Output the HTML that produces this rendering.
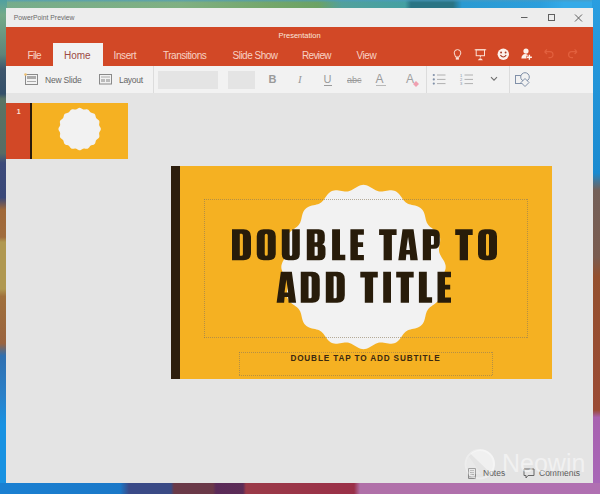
<!DOCTYPE html>
<html><head><meta charset="utf-8">
<style>
*{margin:0;padding:0;box-sizing:border-box}
html,body{width:600px;height:494px;overflow:hidden;background:#5a8a8a}
body{position:relative;font-family:"Liberation Sans",sans-serif}
.a{position:absolute;line-height:1;white-space:nowrap}
#bgtop{position:absolute;left:0;top:0;width:600px;height:9px;background:linear-gradient(90deg,#6aa49a 0%,#7aae8c 20%,#7aac84 45%,#5aa2a0 62%,#2a6a7c 69%,#2c7aa0 74%,#2a98d4 80%,#34aae6 100%)}
#bgleft{position:absolute;left:0;top:0;width:7px;height:494px;background:linear-gradient(180deg,#50a0a0 0%,#74aa88 3%,#6a9c80 12%,#3c5c6c 18%,#2e3e66 20%,#6a8a62 27%,#485a74 32%,#3a4a7c 38%,#a87a48 42%,#b89044 52%,#c49a48 57%,#a86a40 61%,#a05a3a 70%,#3a74b0 74%,#2a84cc 80%,#1892e2 86%,#1892e2 100%)}
#bgright{position:absolute;left:592px;top:0;width:8px;height:494px;background:linear-gradient(180deg,#1a92da 0%,#1c94dc 38%,#7a6050 47%,#924a32 54%,#9a4a34 83%,#a062b2 85%,#a060b4 100%)}
#bgbot{position:absolute;left:0;top:483px;width:600px;height:11px;background:linear-gradient(90deg,#1a86d4 0%,#2078c4 18%,#3a4a82 24%,#3a4a7c 29%,#7a3a4c 31%,#7a3a4a 35%,#5a2a5a 38%,#5c2c58 43%,#9a3040 45%,#9a2c48 60%,#b070a2 62%,#a868b0 75%,#a060b4 100%)}
#win{position:absolute;left:6px;top:8px;width:587px;height:475px;background:#e4e4e4;overflow:hidden}
#title{position:absolute;left:0;top:0;width:587px;height:19px;background:#ededed}
#ribbon{position:absolute;left:0;top:19px;width:587px;height:38.5px;background:#d24826}
#tool{position:absolute;left:0;top:57.5px;width:587px;height:27px;background:#f2f2f2}
.tab{color:#f8d2c4;font-size:10px}
.tb{color:#666;font-size:8.5px}
.sep{position:absolute;top:0;width:1px;height:27px;background:#dcdcdc}
</style></head><body>
<svg style="position:absolute;left:0;top:0" width="600" height="494">
  <defs>
    <linearGradient id="gtop" x1="0" x2="1" y1="0" y2="0">
      <stop offset="0" stop-color="#76ac8c"/><stop offset="0.3" stop-color="#80b082"/><stop offset="0.45" stop-color="#74a66a"/>
      <stop offset="0.53" stop-color="#6ca264"/><stop offset="0.57" stop-color="#52a09c"/><stop offset="0.675" stop-color="#44a0a2"/>
      <stop offset="0.685" stop-color="#2a7484"/><stop offset="0.755" stop-color="#2a7484"/><stop offset="0.77" stop-color="#2a9ad2"/>
      <stop offset="0.9" stop-color="#2c9edc"/><stop offset="0.94" stop-color="#34aae8"/><stop offset="1" stop-color="#34aae8"/>
    </linearGradient>
    <linearGradient id="gtopv" x1="0" x2="0" y1="0" y2="1">
      <stop offset="0" stop-color="#4a9ac0" stop-opacity="0.7"/><stop offset="0.3" stop-color="#4a9ac0" stop-opacity="0"/>
    </linearGradient>
    <linearGradient id="gleft" x1="0" x2="0" y1="0" y2="1">
      <stop offset="0" stop-color="#50a0a0"/><stop offset="0.03" stop-color="#74aa88"/><stop offset="0.11" stop-color="#5e847a"/>
      <stop offset="0.14" stop-color="#3e566c"/><stop offset="0.19" stop-color="#34506a"/><stop offset="0.2" stop-color="#5a7464"/>
      <stop offset="0.31" stop-color="#586c64"/><stop offset="0.33" stop-color="#3c4a7a"/><stop offset="0.4" stop-color="#3a4878"/>
      <stop offset="0.425" stop-color="#a06838"/><stop offset="0.48" stop-color="#a06c3c"/><stop offset="0.49" stop-color="#b09850"/>
      <stop offset="0.585" stop-color="#b09850"/><stop offset="0.6" stop-color="#a0703c"/><stop offset="0.695" stop-color="#9a6440"/>
      <stop offset="0.72" stop-color="#3070b0"/><stop offset="0.8" stop-color="#2a80c8"/><stop offset="0.86" stop-color="#1892e2"/><stop offset="1" stop-color="#1892e2"/>
    </linearGradient>
    <linearGradient id="gright" x1="0" x2="0" y1="0" y2="1">
      <stop offset="0" stop-color="#2a9ee0"/><stop offset="0.35" stop-color="#1a8ad0"/><stop offset="0.385" stop-color="#746058"/>
      <stop offset="0.52" stop-color="#7a5c50"/><stop offset="0.56" stop-color="#94502e"/><stop offset="0.83" stop-color="#9a4a34"/><stop offset="0.845" stop-color="#a862b0"/><stop offset="1" stop-color="#a868b8"/>
    </linearGradient>
    <linearGradient id="gbot" x1="0" x2="1" y1="0" y2="0">
      <stop offset="0" stop-color="#1a80d2"/><stop offset="0.2" stop-color="#1a78c8"/><stop offset="0.215" stop-color="#3a4a88"/>
      <stop offset="0.285" stop-color="#3a4a84"/><stop offset="0.29" stop-color="#6a3a48"/><stop offset="0.355" stop-color="#6a3848"/>
      <stop offset="0.36" stop-color="#5a2a58"/><stop offset="0.405" stop-color="#5c2c56"/><stop offset="0.41" stop-color="#9a3a48"/>
      <stop offset="0.59" stop-color="#9a3048"/><stop offset="0.6" stop-color="#b070a8"/><stop offset="1" stop-color="#b070b2"/>
    </linearGradient>
  </defs>
  <rect x="0" y="0" width="600" height="494" fill="#808080"/>
  <rect x="0" y="0" width="600" height="9" fill="url(#gtop)"/>
  <rect x="0" y="0" width="600" height="9" fill="url(#gtopv)"/>
  <rect x="0" y="0" width="7" height="494" fill="url(#gleft)"/>
  <rect x="592" y="0" width="8" height="494" fill="url(#gright)"/>
  <rect x="0" y="483" width="600" height="11" fill="url(#gbot)"/>
</svg>
<div id="win">
  <div id="title">
    <div class="a" style="left:7.7px;top:6.6px;font-size:6.8px;color:#6a6a6a">PowerPoint Preview</div>
    <svg style="position:absolute;left:500px;top:0" width="87" height="19">
      <line x1="15" y1="9.5" x2="21.5" y2="9.5" stroke="#606060" stroke-width="1"/>
      <rect x="42.5" y="6.5" width="6" height="6" fill="none" stroke="#606060" stroke-width="1"/>
      <path d="M69 6.5 L76 13.5 M76 6.5 L69 13.5" stroke="#606060" stroke-width="1"/>
    </svg>
  </div>
  <div id="ribbon">
    <div class="a" style="left:272.5px;top:4.5px;font-size:7.5px;color:#fbe6dc">Presentation</div>
    <div style="position:absolute;left:47px;top:16px;width:49.5px;height:22.5px;background:#f2f2f2"></div>
    <div class="a tab" style="left:21.5px;top:23.8px;letter-spacing:-0.7px">File</div>
    <div class="a tab" style="left:58px;top:23.8px;color:#9c4a44">Home</div>
    <div class="a tab" style="left:107.5px;top:23.8px;letter-spacing:-0.4px">Insert</div>
    <div class="a tab" style="left:157px;top:23.8px;letter-spacing:-0.48px">Transitions</div>
    <div class="a tab" style="left:226.5px;top:23.8px;letter-spacing:-0.5px">Slide Show</div>
    <div class="a tab" style="left:296px;top:23.8px;letter-spacing:-0.65px">Review</div>
    <div class="a tab" style="left:350.5px;top:23.8px;letter-spacing:-0.45px">View</div>
    <svg style="position:absolute;left:440px;top:19px" width="147" height="19">
      <g fill="none" stroke="#fbe0d4" stroke-width="1">
        <path d="M9.6 11 C9.6 9.6 8.2 8.7 8.2 6.9 A3.3 3.3 0 1 1 14.8 6.9 C14.8 8.7 13.2 9.6 13.2 11 Z"/>
        <path d="M28.7 3.8 H40.2"/>
        <rect x="30.2" y="3.8" width="8.3" height="5.9"/>
        <path d="M34.35 9.7 V11.5"/>
      </g>
      <rect x="9.8" y="11.3" width="3.1" height="2.3" fill="#fbe0d4"/>
      <path d="M31.8 14.2 Q34.35 10.3 36.9 14.2 Z" fill="#fbe0d4"/>
      <circle cx="57.3" cy="8.2" r="5.7" fill="#fdf2ec"/>
      <circle cx="55.1" cy="6.5" r="0.95" fill="#a83a22"/>
      <circle cx="59.6" cy="6.5" r="0.95" fill="#a83a22"/>
      <path d="M54.4 9.2 Q57.3 12.8 60.2 9.2" fill="none" stroke="#a83a22" stroke-width="1.1"/>
      <circle cx="80" cy="5.1" r="2.6" fill="#fdf2ec"/>
      <path d="M75.4 12.6 C75.4 9.6 77.2 8 79.2 8 C81 8 82.6 9.2 82.6 10.8 V12.6 Z" fill="#fdf2ec"/>
      <path d="M83.4 8.3 V14.3 M80.4 11.3 H86.4" stroke="#d24826" stroke-width="3"/>
      <path d="M83.4 8.8 V13.8 M80.9 11.3 H85.9" stroke="#fdf2ec" stroke-width="1.4"/>
      <g fill="none" stroke="#e2603e" stroke-width="1.2">
        <path d="M98.6 5.7 L101 3.4 M98.6 5.7 L101 8 M98.6 5.7 H104 A3 3 0 0 1 104 11.7 H102.5"/>
        <path d="M131 5.7 L128.6 3.4 M131 5.7 L128.6 8 M131 5.7 H125.6 A3 3 0 0 0 125.6 11.7 H127"/>
      </g>
    </svg>
  </div>
  <div id="tool">
    <svg style="position:absolute;left:18px;top:7px" width="14" height="12">
      <rect x="1.5" y="1.5" width="12" height="10" fill="none" stroke="#8a8a8a" stroke-width="1"/>
      <rect x="3" y="3" width="9" height="3" fill="#aaaaaa"/>
      <line x1="3" y1="8.5" x2="12" y2="8.5" stroke="#aaa" stroke-width="1"/>
      <circle cx="1.5" cy="1.5" r="1.3" fill="#f0c070"/>
    </svg>
    <div class="a tb" style="left:39px;top:10px;letter-spacing:-0.2px">New Slide</div>
    <svg style="position:absolute;left:92px;top:7px" width="14" height="12">
      <rect x="1.5" y="1.5" width="12" height="9.5" fill="none" stroke="#8a8a8a" stroke-width="1"/>
      <line x1="3" y1="4" x2="12" y2="4" stroke="#aaa" stroke-width="1"/>
      <rect x="3" y="6" width="4" height="3" fill="#bbb"/>
      <rect x="8" y="6" width="4" height="3" fill="#bbb"/>
    </svg>
    <div class="a tb" style="left:113px;top:10px;letter-spacing:-0.3px">Layout</div>
    <div class="sep" style="left:146.5px"></div>
    <div style="position:absolute;left:152px;top:5px;width:60px;height:18px;background:#e4e4e4"></div>
    <div style="position:absolute;left:221.5px;top:5px;width:27px;height:18px;background:#e4e4e4"></div>
    <div class="a" style="left:262.5px;top:8.5px;font-size:11px;font-weight:bold;color:#9a9a9a">B</div>
    <div class="a" style="left:292px;top:8.5px;font-size:11px;font-style:italic;color:#9a9a9a;font-family:'Liberation Serif',serif">I</div>
    <div class="a" style="left:317.5px;top:8.5px;font-size:11px;color:#9a9a9a">U</div>
    <div style="position:absolute;left:317.5px;top:19.5px;width:8.5px;height:1px;background:#9a9a9a"></div>
    <div class="a" style="left:341px;top:10.5px;font-size:9px;color:#9a9a9a;text-decoration:line-through">abc</div>
    <div class="a" style="left:369.5px;top:7.5px;font-size:12px;color:#9a9a9a">A</div>
    <div style="position:absolute;left:369.5px;top:19.5px;width:10.5px;height:1px;background:#b8b8b8"></div>
    <div class="a" style="left:400px;top:7.5px;font-size:12px;color:#a0a0a0">A</div>
    <svg style="position:absolute;left:406px;top:14px" width="8" height="8"><path d="M1 4 L4 1 L7 4 L4 7Z" fill="#f0a0b0"/></svg>
    <div class="sep" style="left:419.5px"></div>
    <svg style="position:absolute;left:425px;top:6.5px" width="80" height="14">
      <g fill="#8090a8"><circle cx="2.8" cy="3" r="1.1"/><circle cx="2.8" cy="7.4" r="1.1"/><circle cx="2.8" cy="11.6" r="1.1"/></g>
      <g stroke="#b0b0b0" stroke-width="1"><line x1="6" y1="3" x2="14.5" y2="3"/><line x1="6" y1="7.4" x2="14.5" y2="7.4"/><line x1="6" y1="11.6" x2="14.5" y2="11.6"/>
      <line x1="33.5" y1="3" x2="42" y2="3"/><line x1="33.5" y1="7.4" x2="42" y2="7.4"/><line x1="33.5" y1="11.6" x2="42" y2="11.6"/></g>
      <g font-size="4" fill="#8090a8" font-family="Liberation Sans"><text x="29" y="4.5">1</text><text x="29" y="9">2</text><text x="29" y="13">3</text></g>
      <path d="M60 5.2 L63 8.2 L66 5.2" fill="none" stroke="#707070" stroke-width="1.1"/>
    </svg>
    <div class="sep" style="left:502.5px"></div>
    <svg style="position:absolute;left:508px;top:5px" width="18" height="18">
      <rect x="1.5" y="4.5" width="8" height="8" fill="none" stroke="#8090a8" stroke-width="1"/>
      <circle cx="11" cy="6" r="4.3" fill="#f2f2f2" stroke="#8090a8" stroke-width="1"/>
      <path d="M11 7.5 L15 11.5 L11 15.5 L7 11.5 Z" fill="#f2f2f2" stroke="#8090a8" stroke-width="1"/>
    </svg>
  </div>

  <!-- thumbnail -->
  <div style="position:absolute;left:0;top:95.2px;width:23.75px;height:55.5px;background:#d24826"></div>
  <div class="a" style="left:10.8px;top:99.5px;font-size:7px;font-weight:bold;color:#fbe3d8">1</div>
  <div style="position:absolute;left:23.75px;top:95.2px;width:98.25px;height:55.5px;background:#f5b122;overflow:hidden">
    <div style="position:absolute;left:0;top:0;width:2.2px;height:56px;background:#2a1a0a"></div>
    <svg style="position:absolute;left:0;top:0" width="99" height="56" viewBox="0 0 99 56">
      <path id="thumbscallop" d="M49.65 4.85 L50.38 4.96 L51.10 5.26 L51.79 5.67 L52.45 6.09 L53.11 6.40 L53.79 6.56 L54.51 6.55 L55.27 6.44 L56.06 6.31 L56.84 6.27 L57.58 6.40 L58.25 6.73 L58.81 7.25 L59.31 7.88 L59.76 8.53 L60.24 9.10 L60.78 9.54 L61.42 9.84 L62.15 10.04 L62.93 10.22 L63.69 10.45 L64.35 10.82 L64.88 11.34 L65.24 12.01 L65.48 12.76 L65.65 13.54 L65.85 14.27 L66.15 14.91 L66.59 15.46 L67.17 15.93 L67.81 16.39 L68.44 16.88 L68.96 17.45 L69.30 18.11 L69.42 18.85 L69.38 19.63 L69.25 20.43 L69.14 21.19 L69.13 21.91 L69.29 22.58 L69.61 23.24 L70.02 23.91 L70.43 24.59 L70.73 25.31 L70.85 26.05 L70.73 26.78 L70.43 27.50 L70.02 28.19 L69.61 28.85 L69.29 29.51 L69.13 30.19 L69.14 30.91 L69.25 31.67 L69.38 32.46 L69.42 33.25 L69.30 33.99 L68.96 34.65 L68.44 35.22 L67.81 35.71 L67.17 36.16 L66.59 36.64 L66.15 37.18 L65.85 37.82 L65.65 38.55 L65.48 39.33 L65.24 40.09 L64.88 40.76 L64.35 41.28 L63.69 41.64 L62.93 41.88 L62.15 42.05 L61.42 42.25 L60.78 42.56 L60.24 43.00 L59.76 43.57 L59.31 44.22 L58.81 44.85 L58.25 45.36 L57.58 45.70 L56.84 45.83 L56.06 45.79 L55.27 45.66 L54.51 45.54 L53.79 45.54 L53.11 45.69 L52.45 46.01 L51.79 46.42 L51.10 46.83 L50.38 47.14 L49.65 47.25 L48.91 47.14 L48.19 46.83 L47.50 46.42 L46.84 46.01 L46.18 45.69 L45.50 45.54 L44.79 45.54 L44.02 45.66 L43.23 45.79 L42.45 45.83 L41.71 45.70 L41.05 45.36 L40.48 44.85 L39.99 44.22 L39.53 43.57 L39.06 43.00 L38.51 42.56 L37.87 42.25 L37.14 42.05 L36.36 41.88 L35.60 41.64 L34.94 41.28 L34.41 40.76 L34.05 40.09 L33.81 39.33 L33.64 38.55 L33.44 37.82 L33.14 37.18 L32.70 36.64 L32.12 36.16 L31.48 35.71 L30.85 35.22 L30.33 34.65 L30.00 33.99 L29.87 33.25 L29.91 32.46 L30.04 31.67 L30.15 30.91 L30.16 30.19 L30.00 29.51 L29.68 28.85 L29.27 28.19 L28.86 27.50 L28.56 26.78 L28.45 26.05 L28.56 25.31 L28.86 24.59 L29.27 23.91 L29.68 23.24 L30.00 22.58 L30.16 21.91 L30.15 21.19 L30.04 20.43 L29.91 19.63 L29.87 18.85 L30.00 18.11 L30.33 17.45 L30.85 16.88 L31.48 16.39 L32.12 15.93 L32.70 15.46 L33.14 14.91 L33.44 14.27 L33.64 13.54 L33.81 12.76 L34.05 12.01 L34.41 11.34 L34.94 10.82 L35.60 10.45 L36.36 10.22 L37.14 10.04 L37.87 9.84 L38.51 9.54 L39.06 9.10 L39.53 8.53 L39.99 7.88 L40.48 7.25 L41.05 6.73 L41.71 6.40 L42.45 6.27 L43.23 6.31 L44.02 6.44 L44.79 6.55 L45.50 6.56 L46.18 6.40 L46.84 6.09 L47.50 5.67 L48.19 5.26 L48.91 4.96Z" fill="#f2f2f2"/>
    </svg>
  </div>

  <!-- slide -->
  <div style="position:absolute;left:165px;top:158px;width:381px;height:213px;background:#f5b122;overflow:hidden">
    <div style="position:absolute;left:0;top:0;width:8.5px;height:213px;background:#2d1e0d"></div>
    <svg style="position:absolute;left:0;top:0" width="381" height="213">
      <path id="bigscallop" d="M192.50 18.80 L193.93 18.91 L195.36 19.23 L196.76 19.74 L198.14 20.40 L199.48 21.17 L200.80 22.00 L202.10 22.82 L203.38 23.60 L204.65 24.28 L205.93 24.82 L207.23 25.21 L208.56 25.43 L209.93 25.49 L211.35 25.41 L212.80 25.22 L214.30 24.97 L215.83 24.70 L217.37 24.47 L218.90 24.32 L220.41 24.31 L221.88 24.46 L223.28 24.81 L224.61 25.36 L225.85 26.10 L226.99 27.03 L228.05 28.11 L229.03 29.30 L229.96 30.55 L230.85 31.82 L231.72 33.06 L232.62 34.23 L233.56 35.28 L234.58 36.21 L235.67 36.99 L236.87 37.64 L238.16 38.16 L239.54 38.58 L240.99 38.93 L242.49 39.26 L244.01 39.61 L245.51 40.02 L246.95 40.53 L248.30 41.16 L249.53 41.94 L250.62 42.88 L251.56 43.97 L252.34 45.20 L252.97 46.55 L253.48 47.99 L253.89 49.49 L254.24 51.01 L254.57 52.51 L254.92 53.96 L255.34 55.34 L255.86 56.63 L256.51 57.83 L257.29 58.92 L258.22 59.94 L259.27 60.88 L260.44 61.77 L261.68 62.65 L262.95 63.54 L264.20 64.47 L265.39 65.45 L266.47 66.51 L267.40 67.65 L268.14 68.89 L268.69 70.22 L269.04 71.62 L269.19 73.09 L269.18 74.60 L269.03 76.13 L268.80 77.67 L268.53 79.20 L268.28 80.70 L268.09 82.15 L268.01 83.57 L268.07 84.94 L268.29 86.27 L268.68 87.57 L269.22 88.85 L269.90 90.12 L270.68 91.40 L271.50 92.70 L272.33 94.02 L273.10 95.36 L273.76 96.74 L274.27 98.14 L274.59 99.57 L274.70 101.00 L274.59 102.43 L274.27 103.86 L273.76 105.26 L273.10 106.64 L272.33 107.98 L271.50 109.30 L270.68 110.60 L269.90 111.88 L269.22 113.15 L268.68 114.43 L268.29 115.73 L268.07 117.06 L268.01 118.43 L268.09 119.85 L268.28 121.30 L268.53 122.80 L268.80 124.33 L269.03 125.87 L269.18 127.40 L269.19 128.91 L269.04 130.38 L268.69 131.78 L268.14 133.11 L267.40 134.35 L266.47 135.49 L265.39 136.55 L264.20 137.53 L262.95 138.46 L261.68 139.35 L260.44 140.22 L259.27 141.12 L258.22 142.06 L257.29 143.08 L256.51 144.17 L255.86 145.37 L255.34 146.66 L254.92 148.04 L254.57 149.49 L254.24 150.99 L253.89 152.51 L253.48 154.01 L252.97 155.45 L252.34 156.80 L251.56 158.03 L250.62 159.12 L249.53 160.06 L248.30 160.84 L246.95 161.47 L245.51 161.98 L244.01 162.39 L242.49 162.74 L240.99 163.07 L239.54 163.42 L238.16 163.84 L236.87 164.36 L235.67 165.01 L234.58 165.79 L233.56 166.72 L232.62 167.77 L231.72 168.94 L230.85 170.18 L229.96 171.45 L229.03 172.70 L228.05 173.89 L226.99 174.97 L225.85 175.90 L224.61 176.64 L223.28 177.19 L221.88 177.54 L220.41 177.69 L218.90 177.68 L217.37 177.53 L215.83 177.30 L214.30 177.03 L212.80 176.78 L211.35 176.59 L209.93 176.51 L208.56 176.57 L207.23 176.79 L205.93 177.18 L204.65 177.72 L203.38 178.40 L202.10 179.18 L200.80 180.00 L199.48 180.83 L198.14 181.60 L196.76 182.26 L195.36 182.77 L193.93 183.09 L192.50 183.20 L191.07 183.09 L189.64 182.77 L188.24 182.26 L186.86 181.60 L185.52 180.83 L184.20 180.00 L182.90 179.18 L181.62 178.40 L180.35 177.72 L179.07 177.18 L177.77 176.79 L176.44 176.57 L175.07 176.51 L173.65 176.59 L172.20 176.78 L170.70 177.03 L169.17 177.30 L167.63 177.53 L166.10 177.68 L164.59 177.69 L163.12 177.54 L161.72 177.19 L160.39 176.64 L159.15 175.90 L158.01 174.97 L156.95 173.89 L155.97 172.70 L155.04 171.45 L154.15 170.18 L153.27 168.94 L152.38 167.77 L151.44 166.72 L150.42 165.79 L149.33 165.01 L148.13 164.36 L146.84 163.84 L145.46 163.42 L144.01 163.07 L142.51 162.74 L140.99 162.39 L139.49 161.98 L138.05 161.47 L136.70 160.84 L135.47 160.06 L134.38 159.12 L133.44 158.03 L132.66 156.80 L132.03 155.45 L131.52 154.01 L131.11 152.51 L130.76 150.99 L130.43 149.49 L130.08 148.04 L129.66 146.66 L129.14 145.37 L128.49 144.17 L127.71 143.08 L126.78 142.06 L125.73 141.12 L124.56 140.23 L123.32 139.35 L122.05 138.46 L120.80 137.53 L119.61 136.55 L118.53 135.49 L117.60 134.35 L116.86 133.11 L116.31 131.78 L115.96 130.38 L115.81 128.91 L115.82 127.40 L115.97 125.87 L116.20 124.33 L116.47 122.80 L116.72 121.30 L116.91 119.85 L116.99 118.43 L116.93 117.06 L116.71 115.73 L116.32 114.43 L115.78 113.15 L115.10 111.88 L114.32 110.60 L113.50 109.30 L112.67 107.98 L111.90 106.64 L111.24 105.26 L110.73 103.86 L110.41 102.43 L110.30 101.00 L110.41 99.57 L110.73 98.14 L111.24 96.74 L111.90 95.36 L112.67 94.02 L113.50 92.70 L114.32 91.40 L115.10 90.12 L115.78 88.85 L116.32 87.57 L116.71 86.27 L116.93 84.94 L116.99 83.57 L116.91 82.15 L116.72 80.70 L116.47 79.20 L116.20 77.67 L115.97 76.13 L115.82 74.60 L115.81 73.09 L115.96 71.62 L116.31 70.22 L116.86 68.89 L117.60 67.65 L118.53 66.51 L119.61 65.45 L120.80 64.47 L122.05 63.54 L123.32 62.65 L124.56 61.77 L125.73 60.88 L126.78 59.94 L127.71 58.92 L128.49 57.83 L129.14 56.63 L129.66 55.34 L130.08 53.96 L130.43 52.51 L130.76 51.01 L131.11 49.49 L131.52 47.99 L132.03 46.55 L132.66 45.20 L133.44 43.97 L134.38 42.88 L135.47 41.94 L136.70 41.16 L138.05 40.53 L139.49 40.02 L140.99 39.61 L142.51 39.26 L144.01 38.93 L145.46 38.58 L146.84 38.16 L148.13 37.64 L149.33 36.99 L150.42 36.21 L151.44 35.28 L152.38 34.23 L153.27 33.06 L154.15 31.82 L155.04 30.55 L155.97 29.30 L156.95 28.11 L158.01 27.03 L159.15 26.10 L160.39 25.36 L161.72 24.81 L163.12 24.46 L164.59 24.31 L166.10 24.32 L167.63 24.47 L169.17 24.70 L170.70 24.97 L172.20 25.22 L173.65 25.41 L175.07 25.49 L176.44 25.43 L177.77 25.21 L179.07 24.82 L180.35 24.28 L181.62 23.60 L182.90 22.82 L184.20 22.00 L185.52 21.17 L186.86 20.40 L188.24 19.74 L189.64 19.23 L191.07 18.91Z" fill="#f2f2f2"/>
      <g fill="none" stroke="#8a7a5c" stroke-opacity="0.6" stroke-width="1" stroke-dasharray="1 1">
        <path d="M33 33.5 H357 M33 171.5 H357 M33.5 33 V172 M356.5 33 V172"/>
        <path d="M68 186.5 H322 M68 209.5 H322 M68.5 186 V210 M321.5 186 V210"/>
      </g>
    </svg>
    <svg style="position:absolute;left:0;top:0" width="381" height="213">
      <defs>
        <path id="gD" fill-rule="evenodd" d="M0 0H11.5Q19 0 19 7.5V23.5Q19 31 11.5 31H0Z M7.8 4.6H9.6Q10.9 4.6 10.9 6.2V24.9Q10.9 26.5 9.6 26.5H7.8Z"/>
        <path id="gO" fill-rule="evenodd" d="M7 0H12Q19 0 19 7V24Q19 31 12 31H7Q0 31 0 24V7Q0 0 7 0Z M9.5 4.5Q11 4.5 11 6V25Q11 26.6 9.5 26.6Q8 26.6 8 25V6Q8 4.5 9.5 4.5Z"/>
        <path id="gU" d="M0 0H7.8V25Q7.8 26.7 9.1 26.7Q10.4 26.7 10.4 25V0H18V24.5Q18 31 11.5 31H6.5Q0 31 0 24.5Z"/>
        <path id="gB" fill-rule="evenodd" d="M0 0H12Q18 0 18 6V11Q18 14 15.5 15Q18.7 16 18.7 19.5V25Q18.7 31 12.5 31H0Z M7.8 4.6H9.8Q10.6 4.6 10.6 5.5V12Q10.6 13 9.8 13H7.8Z M7.8 17.6H10Q10.9 17.6 10.9 18.5V25.5Q10.9 26.5 10 26.5H7.8Z"/>
        <path id="gL" d="M0 0H7.9V25.5H13.2V31H0Z"/>
        <path id="gE" d="M0 0H13.5V5.6H7.5V13H12.7V17.8H7.5V25.8H13.5V31H0Z"/>
        <path id="gT" d="M0 0H17.5V5.8H12.8V31H4.5V5.8H0Z"/>
        <path id="gA" fill-rule="evenodd" d="M4.25 0H15.25L19.5 31H12L11.5 25.3H8L7.5 31H0Z M9.75 7.8L11.6 20.7H7.9Z"/>
        <path id="gP" fill-rule="evenodd" d="M0 0H11Q17 0 17 6V13.5Q17 19.5 11 19.5H8.2V31H0Z M8.2 6.7H10.2Q11.1 6.7 11.1 7.6V14.6Q11.1 15.5 10.2 15.5H8.2Z"/>
        <path id="gI" d="M0 0H7.8V31H0Z"/>
      </defs>
      <g fill="#281c0a">
        <g transform="translate(0 63.25)">
          <use href="#gD" x="61"/><use href="#gO" x="85.75"/><use href="#gU" x="110.8"/><use href="#gB" x="135.8"/><use href="#gL" x="161.1"/><use href="#gE" x="179.4"/>
          <use href="#gT" x="208.1"/><use href="#gA" x="227.3"/><use href="#gP" x="251.8"/>
          <use href="#gT" x="284.2"/><use href="#gO" x="307"/>
        </g>
        <g transform="translate(0 105.75)">
          <use href="#gA" x="105.6"/><use href="#gD" x="129.75"/><use href="#gD" x="154.8"/>
          <use href="#gT" x="189.3"/><use href="#gI" x="212.2"/><use href="#gT" x="225.2"/><use href="#gL" x="247.9"/><use href="#gE" x="266.5"/>
        </g>
      </g>
    </svg>
    <div class="a" style="left:3.5px;width:381px;text-align:center;top:188.6px;font-size:8.2px;font-weight:bold;letter-spacing:0.85px;color:#3a2810;text-indent:0.85px">DOUBLE TAP TO ADD SUBTITLE</div>
  </div>

  <!-- bottom -->
  <svg style="position:absolute;left:461px;top:460px" width="10" height="11">
    <path d="M1.5 0.5 H8.5 V10.5 H1.5 Z" fill="none" stroke="#8a8a8a" stroke-width="1"/>
    <path d="M3 2.5 H7 M3 4.5 H7 M3 6.5 H7" stroke="#a0a0a0" stroke-width="0.8"/>
    <path d="M1.5 8.8 H8.5" stroke="#8a8a8a" stroke-width="0.8"/>
  </svg>
  <div class="a" style="left:477px;top:461px;font-size:8.5px;color:#5a5a5a">Notes</div>
  <svg style="position:absolute;left:517px;top:460px" width="12" height="11">
    <path d="M1 1 H11 V7.5 H5 L3 10 V7.5 H1 Z" fill="none" stroke="#666" stroke-width="1"/>
  </svg>
  <div class="a" style="left:533px;top:461px;font-size:8.5px;color:#5a5a5a">Comments</div>
  <svg style="position:absolute;left:456px;top:439px" width="34" height="34">
    <circle cx="17.8" cy="17.2" r="14.2" fill="none" stroke="rgba(255,255,255,0.35)" stroke-width="2"/>
    <path d="M8.5 6.8 A14.2 14.2 0 0 1 29 26.5 Z" fill="rgba(255,255,255,0.45)"/>
    <path d="M6 23 A14.2 14.2 0 0 1 7 9.5 L19 27 A14.2 14.2 0 0 1 6 23Z" fill="rgba(255,255,255,0.2)"/>
  </svg>
  <div class="a" style="left:496px;top:443.3px;font-size:25px;color:rgba(255,255,255,0.5)">Neowin</div>
</div>
</body></html>
